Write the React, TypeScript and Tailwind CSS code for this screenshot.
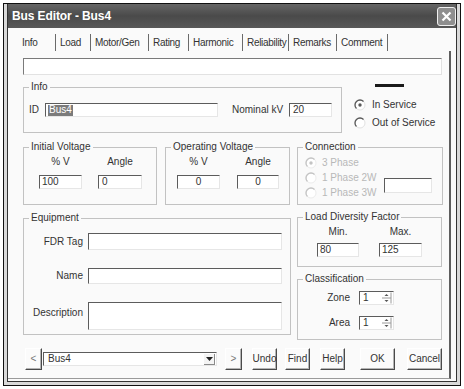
import React from "react";

function Field({ className, children }: { className: string; children?: React.ReactNode }) {
  return (
    <div
      className={`bg-white border-t border-l border-t-[#5c5c5c] border-l-[#5c5c5c] border-r border-b border-r-[#e6e6e6] border-b-[#e6e6e6] flex items-center text-[10px] leading-none text-[#333] ${className}`}
    >
      {children}
    </div>
  );
}

function Radio({ checked, disabled }: { checked?: boolean; disabled?: boolean }) {
  const dark = disabled ? "#c4c4c4" : "#5a5a5a";
  const light = disabled ? "#ececec" : "#e2e2e2";
  return (
    <svg width="12" height="12" viewBox="0 0 12 12" className="shrink-0">
      <circle cx="6" cy="6" r="5" fill="#fff" stroke={light} strokeWidth="1" />
      <path d="M2.46 9.54 A5 5 0 0 1 9.54 2.46" fill="none" stroke={dark} strokeWidth="1.3" />
      {checked && <circle cx="6" cy="6" r="1.7" fill={dark} />}
    </svg>
  );
}

function Group({ title, className, children }: { title: string; className: string; children?: React.ReactNode }) {
  return (
    <fieldset className={`border border-[#c2c2c2] shrink-0 ${className}`}>
      <legend className="ml-[5px] px-[2px] text-[10px] leading-[12px] text-[#333]">{title}</legend>
      {children}
    </fieldset>
  );
}

function Btn({ className, children }: { className: string; children?: React.ReactNode }) {
  return (
    <div
      className={`h-[22px] shrink-0 bg-[#fbfbfb] border-t border-l border-t-white border-l-white border-r border-b border-r-[#4a4a4a] border-b-[#4a4a4a] shadow-[inset_-1px_-1px_0_#b4b4b4] flex items-center justify-center whitespace-nowrap text-[10px] leading-none text-[#333] ${className}`}
    >
      {children}
    </div>
  );
}

function Spin() {
  return (
    <svg width="11" height="12" viewBox="0 0 11 12" className="ml-auto mr-[1px] shrink-0">
      <line x1="1" y1="6" x2="10" y2="6" stroke="#9a9a9a" strokeWidth="1" />
      <line x1="10" y1="0.5" x2="10" y2="11.5" stroke="#9a9a9a" strokeWidth="1" />
      <path d="M3.5 4 L5.5 2 L7.5 4 Z" fill="#555" />
      <path d="M3.5 8 L5.5 10 L7.5 8 Z" fill="#555" />
    </svg>
  );
}

export default function App() {
  const tabs: { label: string; w: string }[] = [
    { label: "Load", w: "w-[35px]" },
    { label: "Motor/Gen", w: "w-[58px]" },
    { label: "Rating", w: "w-[40px]" },
    { label: "Harmonic", w: "w-[54px]" },
    { label: "Reliability", w: "w-[46px]" },
    { label: "Remarks", w: "w-[48px]" },
    { label: "Comment", w: "w-[51px]" },
  ];
  return (
    <div className="w-[464px] h-[389px] bg-white pl-[3px] pt-[3px] overflow-hidden font-['Liberation_Sans',Arial,sans-serif]">
      <div className="w-[458px] h-[383px] border border-[#111] bg-[#d9d9d9] px-[3px] pb-[3px] flex flex-col">
        <div className="flex-1 border-x border-b border-[#333] bg-[#fafafa] flex flex-col">
          {/* Title bar */}
          <div className="h-[24px] shrink-0 bg-gradient-to-b from-[#666] via-[#4a4a4a] to-[#585858] flex items-center pl-[4px]">
            <span className="text-white font-bold text-[12px] leading-none tracking-[-0.1px]">Bus Editor - Bus4</span>
            <div className="ml-auto w-[19px] h-[19px] rounded-[3px] border border-[#f0f0f0] bg-[#8f8f8f] flex items-center justify-center">
              <svg width="11" height="11" viewBox="0 0 11 11">
                <path d="M1.5 1.5 L9.5 9.5 M9.5 1.5 L1.5 9.5" stroke="#fff" strokeWidth="2.2" />
              </svg>
            </div>
          </div>

          {/* Tabs */}
          <div className="mt-[6px] ml-[14px] h-[17px] flex items-stretch text-[10px] leading-none text-[#333] tracking-[-0.3px]">
            <div className="w-[33px] flex items-center">Info</div>
            {tabs.map((t) => (
              <div key={t.label} className={`${t.w} border-l border-[#6a6a6a] pl-[4px] flex items-center whitespace-nowrap`}>
                {t.label}
              </div>
            ))}
            <div className="border-l border-[#6a6a6a]" />
          </div>

          {/* Tab page */}
          <div className="w-[443px] h-[328px] border-r-2 border-r-[#5e5e5e] border-b border-b-[#9a9a9a] pl-[15px] flex flex-col">
            <div className="mt-[7px] w-[419px] h-[17px] border-t border-l border-t-[#7a7a7a] border-l-[#7a7a7a] border-r border-b border-r-[#e2e2e2] border-b-[#e2e2e2] bg-white" />

            {/* Row A */}
            <div className="mt-[6px] flex h-[52px]">
              <Group title="Info" className="w-[319px] h-[52px]">
                <div className="pt-[10px] pl-[5px] flex items-center text-[10px] leading-none text-[#333]">
                  <span className="w-[16px]">ID</span>
                  <Field className="w-[173px] h-[14px] pl-[2px]">
                    <span className="bg-[#7b7b7b] text-white px-[1px] h-[11px] flex items-center">Bus4</span>
                  </Field>
                  <span className="ml-[14px] w-[57px] whitespace-nowrap">Nominal kV</span>
                  <Field className="w-[43px] h-[14px] pl-[3px]">20</Field>
                </div>
              </Group>
              <div className="ml-[12px] w-[88px] flex flex-col text-[10px] leading-none text-[#333]">
                <div className="mt-[3px] ml-[21px] w-[29px] h-[3px] bg-[#1a1a1a]" />
                <div className="mt-[11px] h-[14px] flex items-center gap-[6px] whitespace-nowrap">
                  <Radio checked />
                  <span>In Service</span>
                </div>
                <div className="mt-[4px] h-[14px] flex items-center gap-[6px] whitespace-nowrap">
                  <Radio />
                  <span>Out of Service</span>
                </div>
              </div>
            </div>

            {/* Row B */}
            <div className="mt-[8px] flex h-[64px] text-[10px] leading-none text-[#333]">
              <Group title="Initial Voltage" className="w-[134px] h-[64px]">
                <div className="pt-[3px] flex">
                  <div className="ml-[15px] w-[43px] flex flex-col items-center">
                    <span className="h-[12px] flex items-center">% V</span>
                    <Field className="mt-[7px] w-[43px] h-[14px] pl-[2px]">100</Field>
                  </div>
                  <div className="ml-[16px] w-[44px] flex flex-col items-center">
                    <span className="h-[12px] flex items-center">Angle</span>
                    <Field className="mt-[7px] w-[44px] h-[14px] pl-[3px]">0</Field>
                  </div>
                </div>
              </Group>
              <Group title="Operating Voltage" className="ml-[8px] w-[125px] h-[64px]">
                <div className="pt-[3px] flex">
                  <div className="ml-[11px] w-[43px] flex flex-col items-center">
                    <span className="h-[12px] flex items-center">% V</span>
                    <Field className="mt-[7px] w-[43px] h-[14px] justify-center">0</Field>
                  </div>
                  <div className="ml-[17px] w-[42px] flex flex-col items-center">
                    <span className="h-[12px] flex items-center">Angle</span>
                    <Field className="mt-[7px] w-[42px] h-[14px] justify-center">0</Field>
                  </div>
                </div>
              </Group>
              <Group title="Connection" className="ml-[7px] w-[146px] h-[64px]">
                <div className="pt-[4px] pl-[7px] flex text-[#b8b8b8]">
                  <div className="w-[79px] flex flex-col gap-[3px]">
                    <div className="h-[12px] flex items-center gap-[5px] whitespace-nowrap">
                      <Radio checked disabled />
                      <span>3 Phase</span>
                    </div>
                    <div className="h-[12px] flex items-center gap-[5px] whitespace-nowrap">
                      <Radio disabled />
                      <span>1 Phase 2W</span>
                    </div>
                    <div className="h-[12px] flex items-center gap-[5px] whitespace-nowrap">
                      <Radio disabled />
                      <span>1 Phase 3W</span>
                    </div>
                  </div>
                  <Field className="mt-[21px] w-[48px] h-[15px]" />
                </div>
              </Group>
            </div>

            {/* Row C */}
            <div className="mt-[6px] flex items-start h-[129px] text-[10px] leading-none text-[#333]">
              <Group title="Equipment" className="mt-[1px] w-[268px] h-[123px]">
                <div className="pt-[9px] flex flex-col">
                  <div className="flex items-center">
                    <span className="w-[59px] text-right">FDR Tag</span>
                    <Field className="ml-[5px] w-[194px] h-[17px]" />
                  </div>
                  <div className="mt-[18px] flex items-center">
                    <span className="w-[59px] text-right">Name</span>
                    <Field className="ml-[5px] w-[194px] h-[16px]" />
                  </div>
                  <div className="mt-[18px] flex items-start">
                    <span className="w-[59px] text-right mt-[6px]">Description</span>
                    <Field className="ml-[5px] w-[194px] h-[28px]" />
                  </div>
                </div>
              </Group>
              <div className="ml-[6px] w-[145px] flex flex-col">
                <Group title="Load Diversity Factor" className="w-[145px] h-[56px]">
                  <div className="pt-[3px] flex">
                    <div className="ml-[19px] w-[42px] flex flex-col items-center">
                      <span className="h-[12px] flex items-center">Min.</span>
                      <Field className="mt-[5px] w-[42px] h-[14px] pl-[2px]">80</Field>
                    </div>
                    <div className="ml-[20px] w-[43px] flex flex-col items-center">
                      <span className="h-[12px] flex items-center">Max.</span>
                      <Field className="mt-[5px] w-[43px] h-[14px] pl-[2px]">125</Field>
                    </div>
                  </div>
                </Group>
                <Group title="Classification" className="mt-[6px] w-[145px] h-[67px]">
                  <div className="pt-[6px] flex flex-col">
                    <div className="flex items-center">
                      <span className="w-[52px] text-right">Zone</span>
                      <Field className="ml-[9px] w-[35px] h-[14px] pl-[3px]">
                        1
                        <Spin />
                      </Field>
                    </div>
                    <div className="mt-[11px] flex items-center">
                      <span className="w-[52px] text-right">Area</span>
                      <Field className="ml-[9px] w-[35px] h-[14px] pl-[3px]">
                        1
                        <Spin />
                      </Field>
                    </div>
                  </div>
                </Group>
              </div>
            </div>

            {/* Bottom buttons */}
            <div className="mt-[8px] h-[22px] flex items-center">
              <Btn className="ml-[2px] w-[17px] text-[#777]">&lt;</Btn>
              <Field className="ml-[1px] w-[174px] h-[14px] pl-[4px]">
                <span>Bus4</span>
                <div className="ml-auto mr-[1px] w-[11px] h-[11px] bg-[#f4f4f4] border-r border-b border-[#8a8a8a] flex items-center justify-center">
                  <svg width="7" height="4" viewBox="0 0 7 4">
                    <path d="M0 0 L7 0 L3.5 4 Z" fill="#222" />
                  </svg>
                </div>
              </Field>
              <Btn className="ml-[8px] w-[17px] text-[#777]">&gt;</Btn>
              <Btn className="ml-[10px] w-[25px]">Undo</Btn>
              <Btn className="ml-[8px] w-[25px]">Find</Btn>
              <Btn className="ml-[10px] w-[25px]">Help</Btn>
              <Btn className="ml-[15px] w-[35px] border-[#111] border-t-[#111] border-l-[#111]">OK</Btn>
              <Btn className="ml-[12px] w-[35px]">Cancel</Btn>
            </div>
          </div>
        </div>
      </div>
    </div>
  );
}
